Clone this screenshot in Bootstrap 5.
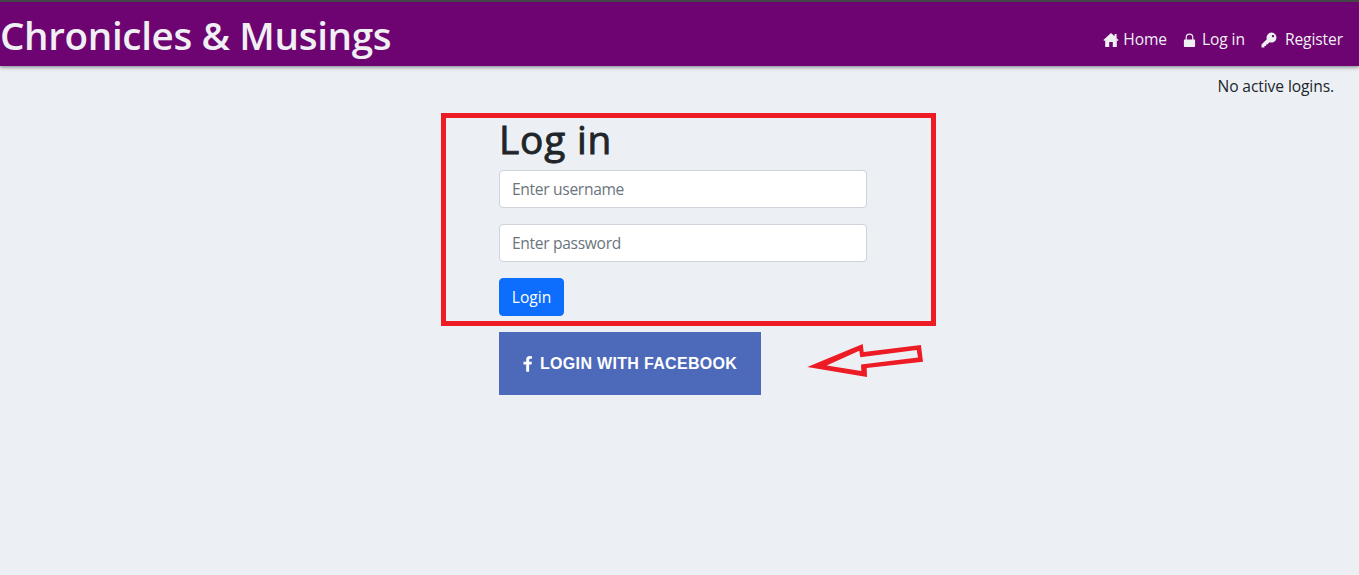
<!DOCTYPE html>
<html lang="en">
<head>
<meta charset="utf-8">
<meta name="viewport" content="width=device-width, initial-scale=1">
<title>Chronicles &amp; Musings</title>
<link href="https://cdn.jsdelivr.net/npm/bootstrap@5.3.0/dist/css/bootstrap.min.css" rel="stylesheet">
<style>
body{background:#ecf0f5;font-family:"Segoe UI","Open Sans","Noto Sans",sans-serif;font-size:15.6px;letter-spacing:-.1px;line-height:24px;color:#212529;overflow:hidden}
.site-bar{height:66px;background:#6d0471;border-top:2px solid #454547;box-shadow:0 1px 4px rgba(0,0,0,.5)}
.site-title{font-size:38.6px;font-weight:600;line-height:48px;color:#f0eff4;letter-spacing:-.35px;padding-top:9px}
.site-nav{padding:9px 16px 0 0;color:#f0eff4}
.site-nav a{color:inherit;white-space:nowrap}
.site-nav svg{margin-top:3px}
.site-nav .lock-label{padding-left:1px}
.status{padding:8px 25px 0 0;height:47px}
.login-frame{width:495px;height:213px;margin-left:441px;border:5px solid #ed1c24;padding:0 64px 0 53px}
.login-frame h1{font-size:38.8px;font-weight:500;line-height:48px;letter-spacing:.8px;-webkit-text-stroke:.9px #212529;margin:-4px 0 7px;padding-top:1px}
.login-frame .form-control{height:38px;font-size:15.6px;margin-bottom:16px;border-color:#ced4da;border-radius:4px;letter-spacing:-.32px}
.login-frame .form-control::placeholder{color:#6c757d}
.login-frame .btn{width:65px;height:38px;padding:6px 0;font-size:15.6px;line-height:24px;border-radius:4px;background:#0d6efd}
.social-row{margin:6px 0 0 499px}
.fb-button{width:262px;height:63px;background:#4c69ba;color:#fff;font:bold 16px/20px "Liberation Sans",Arial,sans-serif;letter-spacing:.32px;border:0;padding:0 0 0 24px}
.fb-text{margin-left:7px}
.arrow{margin:11px 0 0 46px}
</style>
</head>
<body>
<header class="site-bar d-flex justify-content-between align-items-start">
  <div class="site-title">Chronicles &amp; Musings</div>
  <nav class="site-nav d-flex align-items-center align-self-center">
    <a class="d-flex align-items-center text-decoration-none" href="#"><svg width="16" height="16" viewBox="0 0 16 16" fill="currentColor" class="me-1"><path d="M8 1 .4 8.1l.9.9.9-.7V15h4v-5h3.6v5h4V8.3l.9.7.9-.9-2-1.9V2h-2v2.3z"/></svg><span>Home</span></a>
    <a class="d-flex align-items-center text-decoration-none ms-3" href="#"><svg width="14" height="16" viewBox="0 0 14 16" fill="currentColor" class="me-1"><path fill-rule="evenodd" d="M2.6 7.6V5.4a3.9 3.9 0 0 1 7.8 0v2.2h.9q.8 0 .8.8v5.8q0 .8-.8.8H1.7q-.8 0-.8-.8V8.4q0-.8.8-.8zm1.2 0h5.4V5.4a2.7 2.7 0 0 0-5.4 0z"/></svg><span class="lock-label">Log in</span></a>
    <a class="d-flex align-items-center text-decoration-none ms-3" href="#"><svg width="16" height="16" viewBox="0 0 16 16" fill="currentColor" class="me-2"><path fill-rule="evenodd" d="M10.6.6a5 5 0 0 0-4.8 6.6L.5 12.6v2.9h2.9v-1.6H5v-1.5h1.4l2.1-2.2A5 5 0 1 0 10.6.6m1.4 2.3a1.2 1.2 0 1 1 0 2.4 1.2 1.2 0 0 1 0-2.4"/></svg><span>Register</span></a>
  </nav>
</header>
<div class="status text-end">No active logins.</div>
<main>
  <form class="login-frame">
    <h1>Log in</h1>
    <input class="form-control" type="text" placeholder="Enter username">
    <input class="form-control" type="password" placeholder="Enter password">
    <button class="btn btn-primary" type="button">Login</button>
  </form>
  <div class="social-row d-flex align-items-start">
    <button class="fb-button d-flex align-items-center" type="button"><svg width="10" height="16" viewBox="0 0 10 16" fill="currentColor"><path d="M9 .2v2.5H7.5q-1.4 0-1.4 1.3v1.7h2.8l-.4 2.8H6.1v7.3H3.2V8.5H.5V5.7h2.7V3.6Q3.2 0 6.8 0 8.1 0 9 .2"/></svg><span class="fb-text">LOGIN WITH FACEBOOK</span></button>
    <svg class="arrow" width="117" height="35" viewBox="807 343 117 35"><path fill="#ed1c24" fill-rule="evenodd" d="M807.3 367 862.7 344 863.7 352 920.9 345 923 361.7 866.7 368 867 377zM826.7 365.5 861.3 371 861 364.4 918 357.4 916.7 350 860.3 357.3 859.3 350.7z"/></svg>
  </div>
</main>
</body>
</html>
